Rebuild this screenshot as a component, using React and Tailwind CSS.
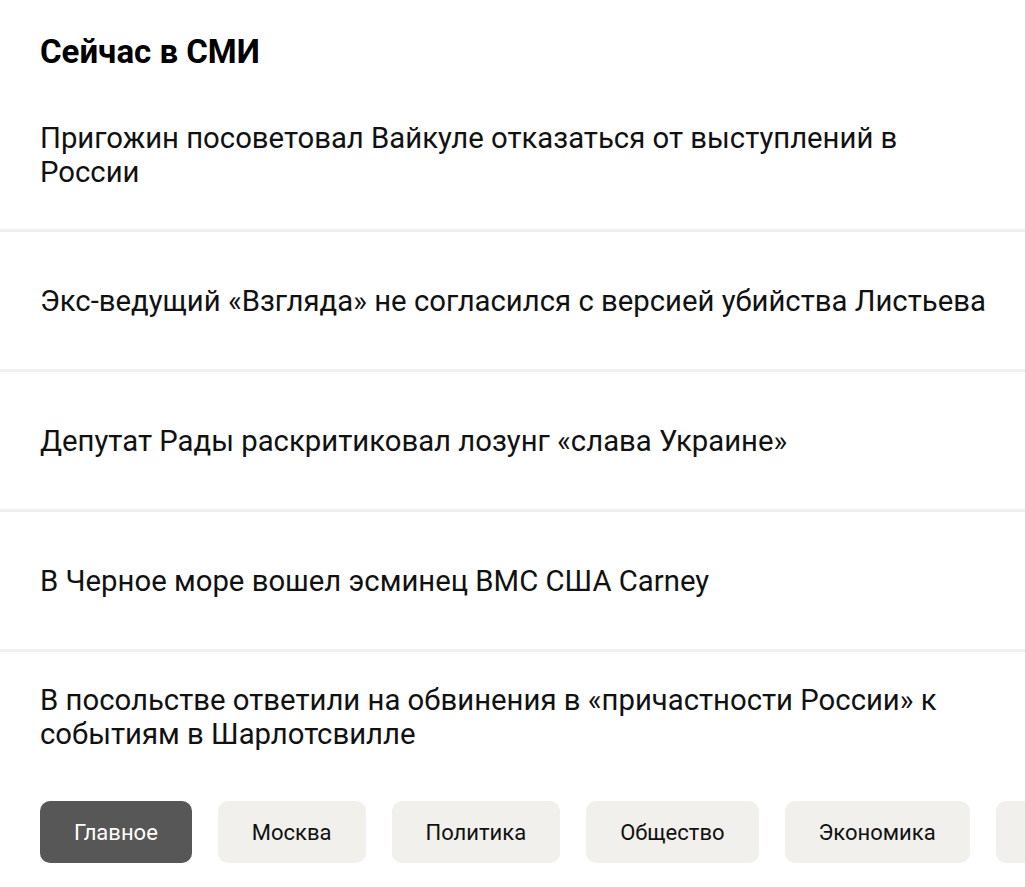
import React from 'react';

const news = [
  { title: 'Пригожин посоветовал Вайкуле отказаться от выступлений в России' },
  { title: 'Экс-ведущий «Взгляда» не согласился с версией убийства Листьева', nowrap: true },
  { title: 'Депутат Рады раскритиковал лозунг «слава Украине»' },
  { title: 'В Черное море вошел эсминец ВМС США Carney' },
  { title: 'В посольстве ответили на обвинения в «причастности России» к событиям в Шарлотсвилле' },
];

const tabs = ['Главное', 'Москва', 'Политика', 'Общество', 'Экономика', 'Спорт'];

const App = () => {
  return (
    <div className="min-h-screen bg-white overflow-hidden font-['Roboto',sans-serif] text-[#111]">
      <h2 className="px-10 pt-[33px] pb-[10px] text-[33px] leading-[38px] font-bold text-black">Сейчас в СМИ</h2>

      <div>
        {news.map((item, i) => {
          const last = i === news.length - 1;
          return (
            <div
              key={i}
              className={
                last
                  ? 'px-10 pt-[31px] pb-[50px]'
                  : 'flex items-center min-h-[140px] py-[40px] px-10 border-b-[3px] border-[#f0f0f0]'
              }
            >
              <p className={`text-[29.3px] leading-[34px] ${item.nowrap ? 'whitespace-nowrap' : ''}`}>
                {item.title}
              </p>
            </div>
          );
        })}
      </div>

      <div className="flex gap-[26px] pl-10 whitespace-nowrap">
        {tabs.map((tab, i) => (
          <button
            key={tab}
            className={`h-[62px] px-[34px] rounded-[10px] text-[22px] shrink-0 ${
              i === 0 ? 'bg-[#575757] text-white' : 'bg-[#f1f0ed] text-[#111]'
            }`}
          >
            {tab}
          </button>
        ))}
      </div>
    </div>
  );
};

export default App;
